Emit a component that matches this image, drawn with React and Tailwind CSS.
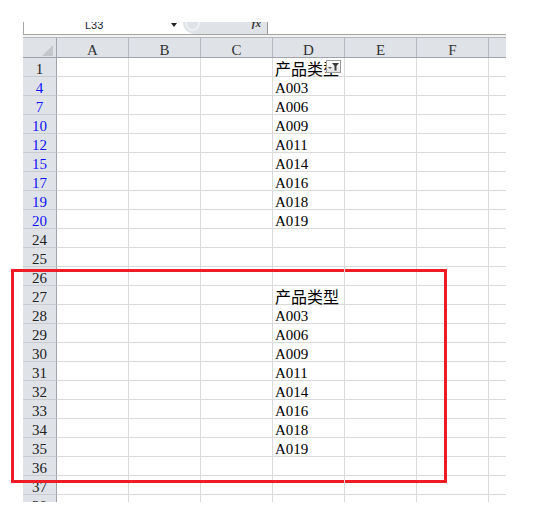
import React from "react";

const ROWS = [
  { n: 1, d: "产品类型", filter: true },
  { n: 4, d: "A003", blue: true },
  { n: 7, d: "A006", blue: true },
  { n: 10, d: "A009", blue: true },
  { n: 12, d: "A011", blue: true },
  { n: 15, d: "A014", blue: true },
  { n: 17, d: "A016", blue: true },
  { n: 19, d: "A018", blue: true },
  { n: 20, d: "A019", blue: true },
  { n: 24 },
  { n: 25 },
  { n: 26 },
  { n: 27, d: "产品类型" },
  { n: 28, d: "A003" },
  { n: 29, d: "A006" },
  { n: 30, d: "A009" },
  { n: 31, d: "A011" },
  { n: 32, d: "A014" },
  { n: 33, d: "A016" },
  { n: 34, d: "A018" },
  { n: 35, d: "A019" },
  { n: 36 },
  { n: 37 },
  { n: 38 },
];

const COLS = ["A", "B", "C", "D", "E", "F"];

const serif = { fontFamily: "'Liberation Serif', 'Noto Sans CJK SC', serif" };

const FilterButton = () => (
  <div className="absolute right-[3px] top-[2px] w-[15px] h-[13px] border border-[#9a9a9a] bg-gradient-to-b from-white to-[#e4e4e4]">
    <svg width="13" height="11" viewBox="0 0 13 11" className="block">
      <polygon points="1,6 5,6 3,8" fill="#555" />
      <polygon points="5,2 12,2 9.5,5 9.5,9.5 7.5,9.5 7.5,5" fill="#3a3a3a" />
    </svg>
  </div>
);

const CellText = ({ text }) => {
  if (!text) return null;
  const cjk = /[\u4e00-\u9fff]/.test(text);
  return cjk ? (
    <span
      className="block pl-[2px] pt-[2px] leading-[16px] text-[16px] text-black whitespace-nowrap"
      style={{ fontFamily: "'Noto Sans CJK SC', sans-serif" }}
    >
      {text}
    </span>
  ) : (
    <span className="block pl-[2px] pt-[4px] leading-[15px] text-[15px] text-black whitespace-nowrap">
      {text}
    </span>
  );
};

const FormulaBar = () => (
  <div className="flex h-[13px] border-b border-[#a5a5a5] overflow-hidden">
    <div className="relative flex w-[160px] border-l border-[#a5a5a5] bg-white">
      <span
        className="pl-[61px] mt-[-2px] text-[11px] leading-[11px] text-[#1c1c3a]"
        style={{ fontFamily: "'Liberation Sans', sans-serif" }}
      >
        L33
      </span>
      <span className="ml-auto mr-[6px] mt-[1px] w-0 h-0 border-x-[3px] border-x-transparent border-t-[4px] border-t-[#222]" />
    </div>
    <div className="relative w-[85px] bg-[#dfe3e8] rounded-bl-[12px] border-r border-[#9a9a9a] flex justify-end">
      <span className="absolute left-[2px] top-[-6px] w-[15px] h-[15px] rounded-full border-[2px] border-[#eef0f3]" />
      <span
        className="pr-[6px] mt-[-4px] text-[11px] leading-[11px] italic font-bold text-[#333]"
        style={{ fontFamily: "'Liberation Serif', serif" }}
      >
        fx
      </span>
    </div>
    <div className="flex-1 bg-white" />
  </div>
);

const HeaderRow = () => (
  <div className="flex h-[21px] bg-[#dfe3e8] border-t border-[#b3b8be] border-b border-b-[#9ea4aa] text-[15px] leading-[15px] text-[#333]">
    <div className="relative w-[34px] h-full border-r border-[#9ea4aa]">
      <svg width="11" height="11" viewBox="0 0 11 11" className="absolute right-[3px] bottom-[1px]">
        <polygon points="11,0 11,11 0,11" fill="#c3c7cc" />
      </svg>
    </div>
    {COLS.map((c) => (
      <div key={c} className="w-[72px] h-full border-r border-[#b3b8be] pt-[5px] text-center">
        {c}
      </div>
    ))}
    <div className="w-[17px] h-full" />
  </div>
);

const Row = ({ row }) => (
  <div className="flex h-[19px]">
    <div
      className={`w-[34px] h-full bg-[#dfe3e8] border-r border-[#9ea4aa] border-b border-b-[#c8ccd2] pt-[4px] text-center text-[15px] leading-[15px] ${
        row.blue ? "text-[#1010ff]" : "text-[#222]"
      }`}
    >
      {row.n}
    </div>
    {COLS.map((c) => (
      <div
        key={c}
        className={`relative w-[72px] h-full border-r border-b border-[#dadada] ${c === "D" ? "z-10" : ""}`}
      >
        {c === "D" && <CellText text={row.d} />}
        {c === "D" && row.filter && <FilterButton />}
      </div>
    ))}
    <div className="w-[17px] h-full border-b border-[#dadada]" />
  </div>
);

export default function App() {
  return (
    <div className="relative w-[550px] h-[529px] bg-white overflow-hidden" style={serif}>
      <div className="pt-[22px] pl-[23px]">
        <div className="w-[483px] h-[480px] overflow-hidden">
          <FormulaBar />
          <div className="h-[2px] bg-[#f3f3f3]" />
          <HeaderRow />
          {ROWS.map((r) => (
            <Row key={r.n} row={r} />
          ))}
        </div>
      </div>
      <div className="absolute left-[11px] top-[269px] w-[436px] h-[214px] border-[3px] border-[#ee1c25]" />
    </div>
  );
}
